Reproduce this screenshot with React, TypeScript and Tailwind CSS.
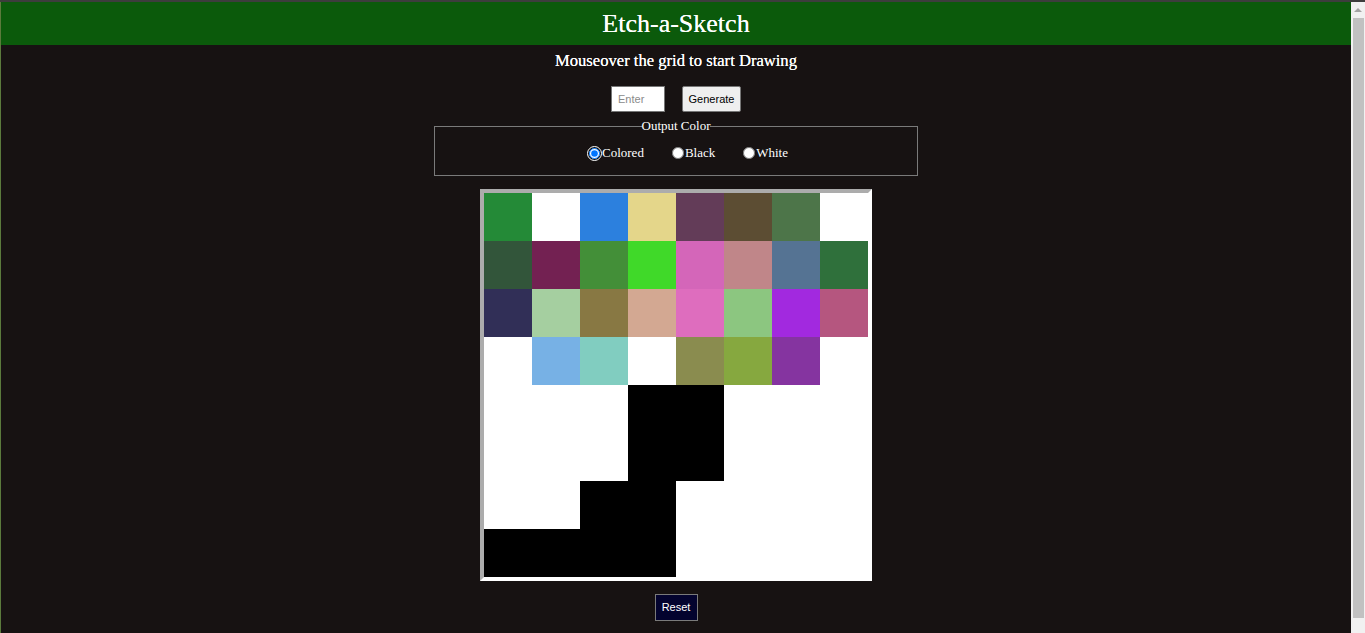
import React from "react";

const W = "#FFFFFF";
const B = "#000000";
const grid: string[][] = [
  ["#248A37", W, "#2C80DE", "#E4D68A", "#633C58", "#5C4D33", "#4D7549", W],
  ["#32553A", "#732152", "#438F38", "#40D929", "#D466B9", "#C08689", "#557393", "#2F703B"],
  ["#312F57", "#A5CFA0", "#887843", "#D3A892", "#DE6DBE", "#8CC680", "#A229DF", "#B5567F"],
  [W, "#77B1E5", "#81CDC0", W, "#8A8C4F", "#86A83F", "#8534A0", W],
  [W, W, W, B, B, W, W, W],
  [W, W, W, B, B, W, W, W],
  [W, W, B, B, W, W, W, W],
  [B, B, B, B, W, W, W, W],
];

export default function App() {
  return (
    <div className="h-[633px] flex border-t-2 border-[#3d3d3d] bg-[#171212] overflow-hidden">
      <div className="flex-1 min-w-0">
        <div className="h-full border-l border-[#5b7a3c] flex flex-col items-center font-['Liberation_Serif',serif] text-white">
          <header className="w-full h-[43px] shrink-0 bg-[#0B5A0B] flex items-center justify-center">
            <h1 className="text-[26px] leading-none font-normal [text-shadow:0_0_0.5px_white]">Etch-a-Sketch</h1>
          </header>
          <h3 className="mt-[5px] text-[16.6px] leading-[22px] font-normal [text-shadow:0_0_0.4px_white]">
            Mouseover the grid to start Drawing
          </h3>
          <div className="mt-[14px] flex items-center gap-[17px] font-['Liberation_Sans',Arial,sans-serif]">
            <input
              type="text"
              placeholder="Enter"
              className="w-[54px] h-[26px] bg-white border border-[#767676] px-[6px] text-[11px] text-black placeholder:text-[#8a8a8a] outline-none"
            />
            <button className="w-[59px] h-[26px] bg-[#efefef] border border-[#767676] rounded-[2px] text-[11px] text-black">
              Generate
            </button>
          </div>
          <fieldset className="mt-[6px] w-[484px] border border-[#7a7a7a] pt-[11px] pb-[14px]">
            <legend className="mx-auto text-[13px] leading-[16px] text-white">Output Color</legend>
            <div className="flex items-center pl-[152px] text-[13px] leading-[16px]">
              <label className="flex items-center">
                <span className="w-[15px] h-[15px] rounded-full border border-white bg-[#101010] flex items-center justify-center">
                  <input type="radio" name="c" defaultChecked className="m-0 w-[11px] h-[11px]" />
                </span>
                <span>Colored</span>
              </label>
              <label className="flex items-center ml-[28px]">
                <input type="radio" name="c" className="m-0 w-[12px] h-[12px]" />
                <span className="ml-[1px]">Black</span>
              </label>
              <label className="flex items-center ml-[28px]">
                <input type="radio" name="c" className="m-0 w-[12px] h-[12px]" />
                <span className="ml-[1px]">White</span>
              </label>
            </div>
          </fieldset>
          <div className="mt-[13px] border-4 border-t-[#acacac] border-l-[#acacac] border-b-white border-r-white grid grid-cols-8">
            {grid.flatMap((row, r) =>
              row.map((c, i) => (
                <div key={`${r}-${i}`} className="w-12 h-12" style={{ backgroundColor: c }} />
              ))
            )}
          </div>
          <button className="mt-[13px] w-[43px] h-[27px] bg-[#03032e] border border-[#7a7a7a] text-[11px] text-white font-['Liberation_Sans',Arial,sans-serif]">
            Reset
          </button>
        </div>
      </div>
      <div className="w-[14px] shrink-0 bg-[#f1f1f1] flex flex-col items-center">
        <svg width="14" height="16" viewBox="0 0 14 16" className="shrink-0">
          <polygon points="7,6 11,10 3,10" fill="#a3a3a3" />
        </svg>
        <div className="w-[11px] h-[600px] ml-[1px] bg-[#c1c1c1]" />
      </div>
    </div>
  );
}
